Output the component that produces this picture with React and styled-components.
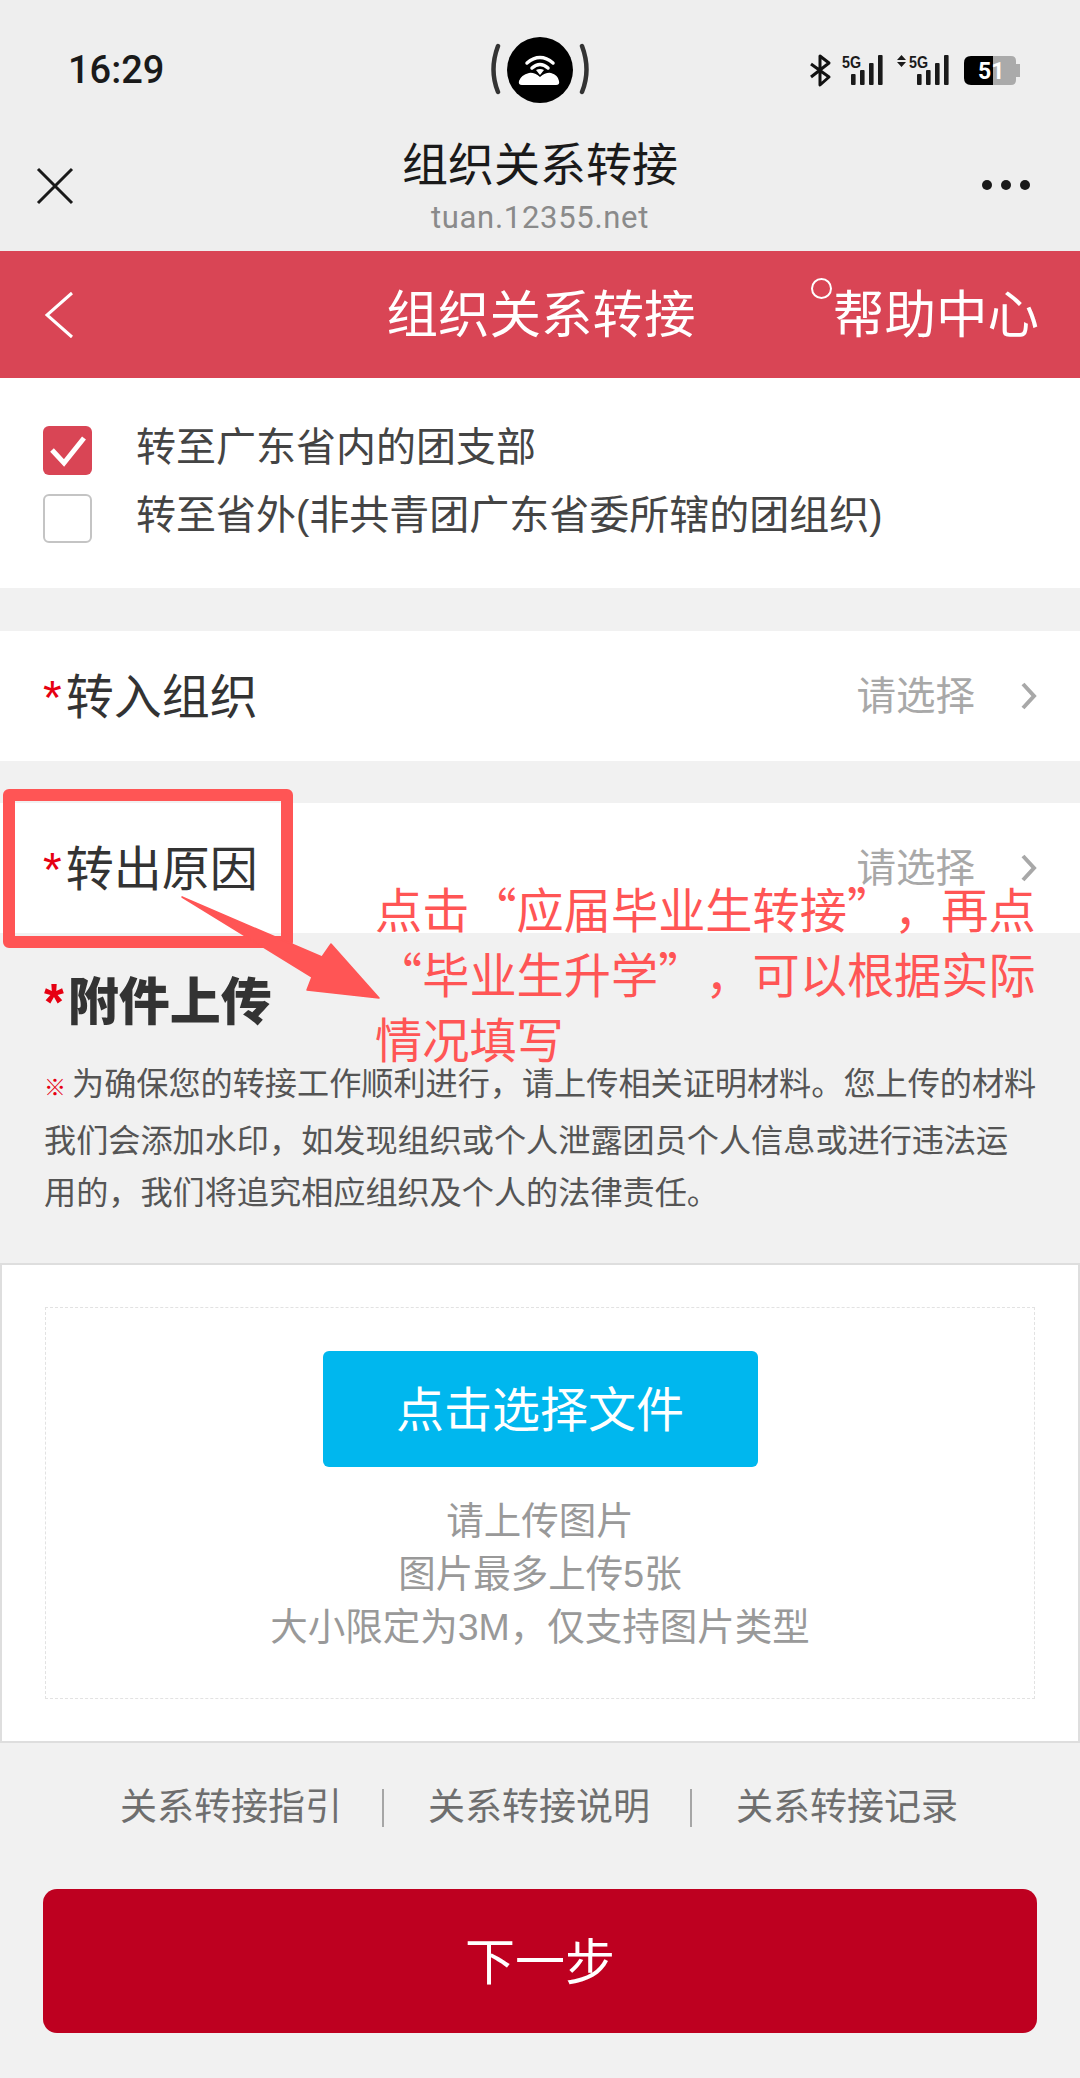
import React from 'react';
import styled, { createGlobalStyle } from 'styled-components';

const GlobalStyle = createGlobalStyle`
  html, body {
    margin: 0;
    padding: 0;
    background: #f1f1f1;
  }
  * {
    box-sizing: border-box;
  }
  body {
    font-family: "Liberation Sans", "Noto Sans CJK SC", sans-serif;
  }
`;

const S = {
  Page: styled.div`
    position: relative;
    width: 1080px;
    height: 2078px;
    overflow: hidden;
    background: #f1f1f1;
  `,
  TopBar: styled.header`
    height: 251px;
    background: #eeeeee;
  `,
  StatusRow: styled.div`
    display: grid;
    grid-template-columns: 1fr auto 1fr;
    align-items: center;
    height: 140px;
    padding: 0 58px;
  `,
  Time: styled.div`
    margin-left: 10px;
    font-family: Roboto, sans-serif;
    font-size: 38px;
    font-weight: 500;
    color: #1a1a1a;
  `,
  StatusIcons: styled.div`
    display: flex;
    justify-content: flex-end;
  `,
  NavRow: styled.div`
    display: grid;
    grid-template-columns: 1fr auto 1fr;
    height: 111px;
    padding: 0 50px;
  `,
  CloseIcon: styled.svg`
    display: block;
    width: 38px;
    height: 38px;
    margin: 27px 0 0 -14px;
  `,
  NavTitles: styled.div`
    text-align: center;
    margin-top: -2px;
  `,
  NavTitle: styled.div`
    font-family: "Noto Sans CJK SC", sans-serif;
    font-size: 46px;
    line-height: 46px;
    color: #1a1a1a;
  `,
  NavUrl: styled.div`
    margin-top: 17px;
    font-family: Roboto, sans-serif;
    font-size: 31px;
    line-height: 34px;
    letter-spacing: 0.7px;
    color: #8a8a8a;
  `,
  MoreDots: styled.div`
    display: flex;
    justify-content: flex-end;
    gap: 9px;
    margin-top: 40px;
  `,
  Dot: styled.span`
    width: 10px;
    height: 10px;
    border-radius: 50%;
    background: #1a1a1a;
  `,
  RedBar: styled.div`
    display: grid;
    grid-template-columns: 1fr auto 1fr;
    align-items: center;
    height: 127px;
    padding: 0 41px 0 43px;
    background: #d94555;
    color: #fff;
    font-family: "Noto Sans CJK SC", sans-serif;
    font-size: 51.5px;
    line-height: 60px;
  `,
  BackIcon: styled.svg`
    display: block;
    width: 32px;
    height: 48px;
  `,
  BarTitle: styled.div`
    margin-top: -7px;
  `,
  HelpLink: styled.div`
    position: relative;
    justify-self: end;
    margin-top: -7px;
  `,
  HelpRing: styled.span`
    position: absolute;
    left: -22px;
    top: -3px;
    width: 21px;
    height: 21px;
    border: 2px solid #fff;
    border-radius: 50%;
  `,
  CheckSection: styled.section`
    display: flex;
    flex-direction: column;
    gap: 19px;
    height: 210px;
    padding: 48px 43px 0;
    background: #fff;
  `,
  CheckRow: styled.label`
    display: flex;
    gap: 44px;
  `,
  Box: styled.span`
    display: flex;
    align-items: center;
    justify-content: center;
    flex: none;
    width: 49px;
    height: 49px;
    border-radius: 6px;
    background: ${(p) => (p.$checked ? '#d94555' : '#fff')};
    border: ${(p) => (p.$checked ? 'none' : '2px solid #c4c4c4')};
  `,
  CheckText: styled.span`
    font-size: 40px;
    line-height: 42px;
    color: #444;
  `,
  SelectRow: styled.div`
    display: flex;
    align-items: center;
    height: 130px;
    margin-top: ${(p) => p.$top}px;
    padding: 0 43px;
    background: #fff;
  `,
  RowLabel: styled.div`
    flex: 1;
    margin-bottom: 7px;
    font-size: 48px;
    color: #333;
  `,
  Star: styled.span`
    margin-right: 4px;
    color: #e60012;
  `,
  RowValue: styled.span`
    margin: 0 45px 7px 0;
    font-size: 39.5px;
    color: #a8a8a8;
  `,
  ChevronIcon: styled.svg`
    display: block;
    width: 17px;
    height: 30px;
  `,
  Attachment: styled.section`
    padding: 46px 44px 0;
  `,
  AttachTitle: styled.h2`
    margin: 0;
    font-size: 51px;
    line-height: 48px;
    font-weight: 900;
    color: #333;
  `,
  Note: styled.p`
    width: 994px;
    margin: 31px 0 43px;
    font-size: 32.15px;
    line-height: 52.5px;
    color: #555;
  `,
  NoteMark: styled.span`
    display: inline-block;
    width: 28px;
    font-size: 22px;
    font-weight: 900;
    color: #e60012;
  `,
  UploadCard: styled.section`
    height: 480px;
    padding: 42px 43px;
    background: #fff;
    border: 2px solid #dedede;
  `,
  DropZone: styled.div`
    display: flex;
    flex-direction: column;
    align-items: center;
    height: 392px;
    padding-top: 43px;
    border: 1px dashed #e2e2e2;
  `,
  PickButton: styled.div`
    width: 435px;
    height: 116px;
    border-radius: 6px;
    background: #00b7ee;
    color: #fff;
    font-family: "Noto Sans CJK SC", sans-serif;
    font-size: 48px;
    line-height: 111px;
    text-align: center;
  `,
  Tips: styled.div`
    margin-top: 28px;
    font-size: 37.5px;
    line-height: 53px;
    color: #999;
    text-align: center;
  `,
  Links: styled.nav`
    display: flex;
    justify-content: center;
    margin: 46px 6px 0 0;
  `,
  LinkItem: styled.span`
    padding: 0 40px 0 44px;
    font-size: 37px;
    line-height: 38px;
    color: #6e6e6e;
    border-left: ${(p) => (p.$first ? 'none' : '2px solid #a6a6a6')};
  `,
  NextButton: styled.div`
    height: 144px;
    margin: 62px 43px 0;
    border-radius: 14px;
    background: #be0020;
    color: #fff;
    font-family: "Noto Sans CJK SC", sans-serif;
    font-size: 50px;
    line-height: 139px;
    text-align: center;
  `,
  MarkBox: styled.div`
    position: absolute;
    left: 3px;
    top: 789px;
    width: 290px;
    height: 159px;
    border: 12px solid #ff5555;
    border-radius: 6px;
  `,
  MarkArrow: styled.svg`
    position: absolute;
    left: 0;
    top: 0;
    width: 1080px;
    height: 2078px;
    pointer-events: none;
  `,
  MarkText: styled.div`
    position: absolute;
    left: 375px;
    top: 875px;
    width: 690px;
    font-family: "Noto Sans CJK SC", sans-serif;
    font-size: 47.2px;
    line-height: 65px;
    color: #ff5555;
    text-spacing-trim: space-all;
  `,
};

function WifiBadge() {
  return (
    <svg width="104" height="66" viewBox="0 0 104 66">
      <path d="M10 9 Q1 33 10 55" fill="none" stroke="#333" strokeWidth="4.5" strokeLinecap="round" />
      <path d="M94 9 Q103 33 94 55" fill="none" stroke="#333" strokeWidth="4.5" strokeLinecap="round" />
      <circle cx="52" cy="33" r="33" fill="#000" />
      <path d="M39 26 Q52 15 65 26" fill="none" stroke="#fff" strokeWidth="3.5" strokeLinecap="round" />
      <path d="M44 31 Q52 24 60 31" fill="none" stroke="#fff" strokeWidth="3.5" strokeLinecap="round" />
      <path d="M48 33 Q52 31 56 33 L52 38 Z" fill="#fff" />
      <path d="M34 48 Q30 48 31 44 Q33 38 41 36 Q46 35 52 40 Q58 35 63 36 Q70 38 71 44 Q72 48 68 48 Z" fill="#fff" />
    </svg>
  );
}

function SignalBars({ x }) {
  const bars = [[0, 24], [9, 20], [18, 13], [27, 5]];
  return bars.map(([dx, top]) => (
    <rect key={dx} x={x + dx} y={top} width="4.6" height={35 - top} rx="1" fill="#1a1a1a" />
  ));
}

function StatusGlyphs() {
  return (
    <svg width="214" height="40" viewBox="0 0 214 40">
      <path d="M3 14 L21 27 L12 35 V6 L21 13 L3 27" fill="none" stroke="#111" strokeWidth="3" strokeLinejoin="round" />
      <text x="34" y="17.5" fontFamily="Liberation Sans" fontWeight="700" fontSize="17" textLength="19" lengthAdjust="spacingAndGlyphs" fill="#1a1a1a">5G</text>
      <SignalBars x={43} />
      <path d="M93.5 5 L98 10 H89 Z M93.5 17 L98 12 H89 Z" fill="#1a1a1a" />
      <text x="101" y="17.5" fontFamily="Liberation Sans" fontWeight="700" fontSize="17" textLength="19" lengthAdjust="spacingAndGlyphs" fill="#1a1a1a">5G</text>
      <SignalBars x={109} />
      <path d="M185 6 H203 Q208 6 208 11 V14 H212 V27 H208 V30 Q208 35 203 35 H185 Z" fill="#aaaaaa" />
      <path d="M185 6 H163 Q156 6 156 13 V28 Q156 35 163 35 H185 Z" fill="#000" />
      <text x="170" y="29" fontFamily="Roboto" fontWeight="700" fontSize="23" fill="#fff">51</text>
    </svg>
  );
}

function Chevron() {
  return (
    <S.ChevronIcon viewBox="0 0 17 30">
      <path d="M3 3 L14 15 L3 27" fill="none" stroke="#a8a8a8" strokeWidth="4" />
    </S.ChevronIcon>
  );
}

function SelectField({ label, top }) {
  return (
    <S.SelectRow $top={top}>
      <S.RowLabel><S.Star>*</S.Star>{label}</S.RowLabel>
      <S.RowValue>请选择</S.RowValue>
      <Chevron />
    </S.SelectRow>
  );
}

export default function App() {
  return (
    <S.Page>
      <GlobalStyle />
      <S.TopBar>
        <S.StatusRow>
          <S.Time>16:29</S.Time>
          <WifiBadge />
          <S.StatusIcons><StatusGlyphs /></S.StatusIcons>
        </S.StatusRow>
        <S.NavRow>
          <S.CloseIcon viewBox="0 0 38 38">
            <path d="M2 2 L36 36 M36 2 L2 36" fill="none" stroke="#1a1a1a" strokeWidth="3" />
          </S.CloseIcon>
          <S.NavTitles>
            <S.NavTitle>组织关系转接</S.NavTitle>
            <S.NavUrl>tuan.12355.net</S.NavUrl>
          </S.NavTitles>
          <S.MoreDots><S.Dot /><S.Dot /><S.Dot /></S.MoreDots>
        </S.NavRow>
      </S.TopBar>

      <S.RedBar>
        <S.BackIcon viewBox="0 0 32 48">
          <path d="M29 2 L4 24 L29 46" fill="none" stroke="#fff" strokeWidth="3" />
        </S.BackIcon>
        <S.BarTitle>组织关系转接</S.BarTitle>
        <S.HelpLink><S.HelpRing />帮助中心</S.HelpLink>
      </S.RedBar>

      <S.CheckSection>
        <S.CheckRow>
          <S.Box $checked>
            <svg width="38" height="32" viewBox="0 0 38 32">
              <path d="M3 15 L15 28 L35 3" fill="none" stroke="#fff" strokeWidth="5" />
            </svg>
          </S.Box>
          <S.CheckText>转至广东省内的团支部</S.CheckText>
        </S.CheckRow>
        <S.CheckRow>
          <S.Box />
          <S.CheckText>转至省外(非共青团广东省委所辖的团组织)</S.CheckText>
        </S.CheckRow>
      </S.CheckSection>

      <SelectField label="转入组织" top={43} />
      <SelectField label="转出原因" top={42} />

      <S.Attachment>
        <S.AttachTitle><S.Star>*</S.Star>附件上传</S.AttachTitle>
        <S.Note>
          <S.NoteMark>※</S.NoteMark>
          为确保您的转接工作顺利进行，请上传相关证明材料。您上传的材料我们会添加水印，如发现组织或个人泄露团员个人信息或进行违法运用的，我们将追究相应组织及个人的法律责任。
        </S.Note>
      </S.Attachment>

      <S.UploadCard>
        <S.DropZone>
          <S.PickButton>点击选择文件</S.PickButton>
          <S.Tips>
            <div>请上传图片</div>
            <div>图片最多上传5张</div>
            <div>大小限定为3M，仅支持图片类型</div>
          </S.Tips>
        </S.DropZone>
      </S.UploadCard>

      <S.Links>
        <S.LinkItem $first>关系转接指引</S.LinkItem>
        <S.LinkItem>关系转接说明</S.LinkItem>
        <S.LinkItem>关系转接记录</S.LinkItem>
      </S.Links>

      <S.NextButton>下一步</S.NextButton>

      <S.MarkBox />
      <S.MarkArrow viewBox="0 0 1080 2078">
        <path d="M182 897 L322 957 L331 944 L379 998 L307 990 L312 977 Z" fill="#ff5555" stroke="#ff5555" strokeWidth="1.5" strokeLinejoin="round" />
      </S.MarkArrow>
      <S.MarkText>
        点击“应届毕业生转接”，再点<br />
        “毕业生升学”，可以根据实际<br />
        情况填写
      </S.MarkText>
    </S.Page>
  );
}
